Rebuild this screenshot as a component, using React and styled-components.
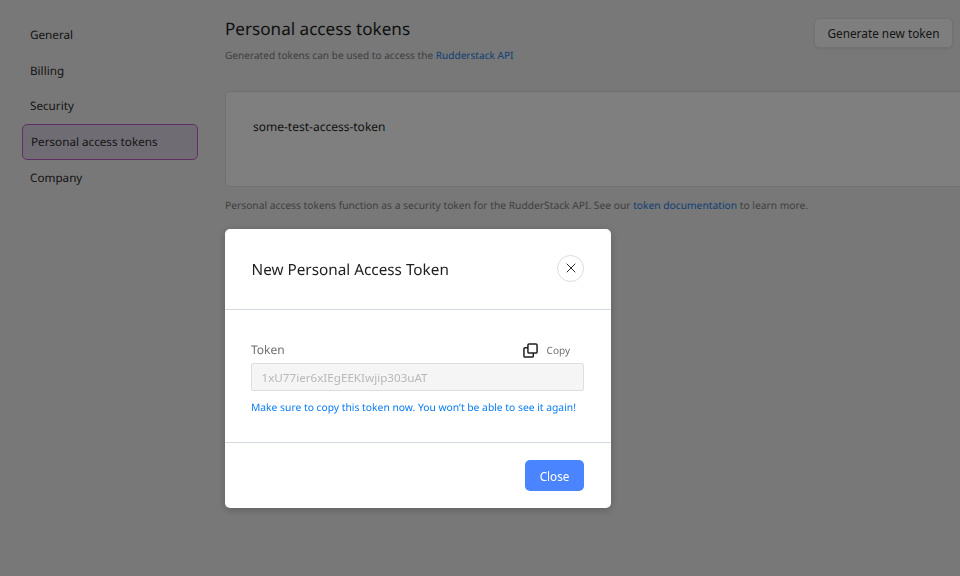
import React from 'react';
import styled, { createGlobalStyle } from 'styled-components';

const GlobalStyle = createGlobalStyle`
  html, body {
    margin: 0;
    padding: 0;
    height: 100%;
    overflow: hidden;
    background: #f0f0f0;
    font-family: 'Noto Sans', 'Open Sans', sans-serif;
    text-rendering: geometricPrecision;
  }
  * {
    box-sizing: border-box;
  }
`;

const navItems = ['General', 'Billing', 'Security', 'Personal access tokens', 'Company'];

function CopyIcon() {
  return (
    <svg width="15" height="15" viewBox="0 0 16 16" fill="none" stroke="#1f1f1f" strokeWidth="1.6" strokeLinejoin="round">
      <rect x="5.25" y="1" width="9.75" height="9.75" rx="1.2" />
      <path d="M5.25 5H2.2C1.5 5 1 5.5 1 6.2v7.6c0 .7.5 1.2 1.2 1.2h7.6c.7 0 1.2-.5 1.2-1.2v-3.05" />
    </svg>
  );
}

function CloseIcon() {
  return (
    <svg width="10" height="10" viewBox="0 0 10 10" fill="none" stroke="#2a2a2a" strokeWidth="1" strokeLinecap="round">
      <path d="M1 1l8 8M9 1L1 9" />
    </svg>
  );
}

function App() {
  return (
    <>
      <GlobalStyle />
      <Page>
        <Sidebar>
          {navItems.map((item) => (
            <NavItem key={item} $active={item === 'Personal access tokens'}>
              {item}
            </NavItem>
          ))}
        </Sidebar>
        <Main>
          <Header>
            <div>
              <Title>Personal access tokens</Title>
              <Subtitle>
                Generated tokens can be used to access the <TextLink>Rudderstack API</TextLink>
              </Subtitle>
            </div>
            <GhostButton>Generate new token</GhostButton>
          </Header>
          <TokenCard>
            <TokenName>some-test-access-token</TokenName>
            <RevokeButton />
          </TokenCard>
          <Note>
            Personal access tokens function as a security token for the RudderStack API. See our{' '}
            <TextLink>token documentation</TextLink> to learn more.
          </Note>
        </Main>
      </Page>
      <Overlay>
        <Modal>
          <ModalHeader>
            <ModalTitle>New Personal Access Token</ModalTitle>
            <CloseCircle>
              <CloseIcon />
            </CloseCircle>
          </ModalHeader>
          <ModalBody>
            <LabelRow>
              <Label>Token</Label>
              <CopyAction>
                <CopyIcon />
                <span>Copy</span>
              </CopyAction>
            </LabelRow>
            <TokenInput disabled value="1xU77ier6xIEgEEKIwjip303uAT" readOnly />
            <Warning>Make sure to copy this token now. You won’t be able to see it again!</Warning>
          </ModalBody>
          <ModalFooter>
            <PrimaryButton>Close</PrimaryButton>
          </ModalFooter>
        </Modal>
      </Overlay>
    </>
  );
}

export default App;

const Page = styled.div`
  display: flex;
  width: 960px;
  height: 576px;
  overflow: hidden;
  background: #f0f0f0;
`;

const Sidebar = styled.nav`
  flex: none;
  width: 225px;
  padding: 17px 27px 0 22px;
  display: flex;
  flex-direction: column;
`;

const NavItem = styled.div`
  height: ${(p) => (p.$active ? '36.5px' : '35.5px')};
  display: flex;
  align-items: center;
  padding-left: ${(p) => (p.$active ? '8px' : '7px')};
  padding-top: ${(p) => (p.$active ? '0' : '1.4px')};
  font-size: 11.7px;
  color: #2c2c2c;
  border-radius: 5px;
  border: 1px solid ${(p) => (p.$active ? '#c060c8' : 'transparent')};
  background: ${(p) => (p.$active ? '#e0d9e9' : 'transparent')};
`;

const Main = styled.main`
  flex: none;
  width: 800px;
`;

const Header = styled.header`
  width: 728px;
  height: 91px;
  padding-top: 18px;
  display: flex;
  justify-content: space-between;
  align-items: flex-start;
`;

const Title = styled.h1`
  margin: 0;
  font-size: 17.1px;
  line-height: 24px;
  font-weight: 400;
  color: #1f1f1f;
`;

const Subtitle = styled.p`
  margin: 5px 0 0;
  font-size: 10.1px;
  line-height: 16px;
  color: #808080;
`;

const TextLink = styled.a`
  color: #2280e8;
`;

const GhostButton = styled.button`
  width: 139px;
  height: 30px;
  padding: 0;
  font: 400 11.8px 'Noto Sans', sans-serif;
  color: #2c2c2c;
  background: #fdfdfd;
  border: 1px solid #e4e4e4;
  border-radius: 5px;
  box-shadow: 0 1px 2px rgba(0, 0, 0, 0.08);
`;

const TokenCard = styled.section`
  height: 96px;
  padding: 21px 0 0 27px;
  display: flex;
  justify-content: space-between;
  align-items: flex-start;
  background: #ffffff;
  border: 1px solid #e0e0e0;
  border-radius: 5px;
`;

const TokenName = styled.div`
  font-size: 12px;
  line-height: 27px;
  color: #1f1f1f;
`;

const RevokeButton = styled.button`
  width: 68px;
  height: 30px;
  margin-right: -25px;
  background: #ffffff;
  border: 1px solid #c060c8;
  border-radius: 5px;
`;

const Note = styled.p`
  margin: 11px 0 0;
  font-size: 10.25px;
  line-height: 16px;
  color: #808080;
`;

const Overlay = styled.div`
  position: fixed;
  inset: 0;
  padding: 228.5px 0 0 225px;
  background: rgba(0, 0, 0, 0.5);
`;

const Modal = styled.div`
  width: 386px;
  height: 279.5px;
  display: flex;
  flex-direction: column;
  background: #ffffff;
  border-radius: 5px;
  box-shadow: 0 2px 8px rgba(0, 0, 0, 0.2);
`;

const ModalHeader = styled.div`
  flex: none;
  height: 81.5px;
  padding: 0 27px 1px 26.5px;
  display: flex;
  justify-content: space-between;
  align-items: center;
  border-bottom: 1px solid #d5dae1;
`;

const ModalTitle = styled.h2`
  margin: 4px 0 0;
  font-size: 15.3px;
  font-weight: 400;
  color: #1f1f1f;
`;

const CloseCircle = styled.button`
  width: 27px;
  height: 27px;
  padding: 0;
  display: flex;
  align-items: center;
  justify-content: center;
  background: #ffffff;
  border: 1px solid #dcdcdc;
  border-radius: 50%;
`;

const ModalBody = styled.div`
  flex: none;
  height: 133px;
  padding: 31px 27px 0 26px;
  border-bottom: 1px solid #d5dae1;
`;

const LabelRow = styled.div`
  display: flex;
  justify-content: space-between;
  align-items: center;
  height: 18px;
`;

const Label = styled.span`
  margin-top: -2px;
  font-size: 12px;
  color: #6e6e6e;
`;

const CopyAction = styled.div`
  display: flex;
  align-items: center;
  gap: 9px;
  padding-right: 14px;
  font-size: 10px;
  color: #6e6e6e;
`;

const TokenInput = styled.input`
  display: block;
  width: 333px;
  height: 28px;
  margin: 4px 0 0;
  padding: 0 9.5px;
  font: 400 11.65px 'Noto Sans', sans-serif;
  color: #b8b8b8;
  background: #f5f5f5;
  border: 1px solid #dedede;
  border-radius: 2px;
`;

const Warning = styled.p`
  margin: 9px 0 0;
  font-size: 10.3px;
  line-height: 16px;
  color: #0a7cf0;
`;

const ModalFooter = styled.div`
  flex: 1;
  display: flex;
  justify-content: flex-end;
  padding: 17px 27px 0 0;
`;

const PrimaryButton = styled.button`
  width: 59px;
  height: 31px;
  padding: 0;
  font: 400 11.7px 'Noto Sans', sans-serif;
  color: #ffffff;
  background: #4a85ff;
  border: none;
  border-radius: 5px;
`;
